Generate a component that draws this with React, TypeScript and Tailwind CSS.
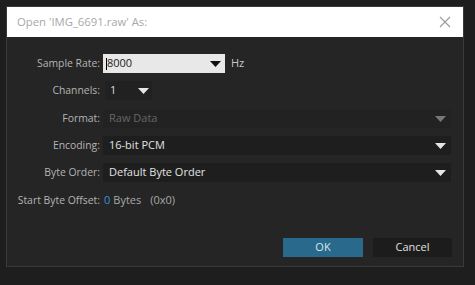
import React from "react";

const Arrow = ({ color }: { color: string }) => (
  <svg width="11" height="6" viewBox="0 0 11 6">
    <polygon points="0,0 11,0 5.5,6" fill={color} />
  </svg>
);

const Label = ({ children }: { children: React.ReactNode }) => (
  <div className="w-[96px] shrink-0 text-right pr-[3px] text-[10.4px] text-[#b4b4b4]">{children}</div>
);

export default function App() {
  return (
    <div
      className="w-[475px] h-[285px] bg-[#1e1e1e] pt-[6px] pl-[6px] overflow-hidden"
      style={{ fontFamily: '"Open Sans", "Noto Sans", sans-serif' }}
    >
      <div className="w-[458px] h-[261px] border border-[#3a3a3a] bg-[#252525] flex flex-col">
        <div className="h-[30px] bg-white flex items-center justify-between pl-[10px] pr-[12px]">
          <span className="text-[11.3px] text-[#a8a8a8]">Open 'IMG_6691.raw' As:</span>
          <svg width="12" height="12" viewBox="0 0 12 12">
            <path d="M1 1 L11 11 M11 1 L1 11" stroke="#9a9a9a" strokeWidth="1.1" />
          </svg>
        </div>
        <div className="flex flex-col text-[11px] pt-[17px] gap-[8px]">
          <div className="flex items-center h-[19px]">
            <Label>Sample Rate:</Label>
            <div className="w-[122px] h-[19px] bg-[#e8e8e8] flex items-center justify-between pl-[3px] pr-[4px] text-[#222]">
              <span className="flex items-center">
                <span className="inline-block w-[1px] h-[12px] bg-black" />
                <span>8000</span>
              </span>
              <Arrow color="#111" />
            </div>
            <span className="ml-[6px] text-[#c8c8c8]">Hz</span>
          </div>
          <div className="flex items-center h-[19px]">
            <Label>Channels:</Label>
            <div className="ml-[2px] w-[47px] h-[19px] bg-[#212121] flex items-center justify-between pl-[5px] pr-[3px] text-[#dedede]">
              <span>1</span>
              <Arrow color="#e6e6e6" />
            </div>
          </div>
          <div className="flex items-center h-[19px] mt-[1px]">
            <Label>Format:</Label>
            <div className="w-[348px] h-[19px] bg-[#222222] flex items-center justify-between pl-[6px] pr-[5px] text-[#666]">
              <span>Raw Data</span>
              <Arrow color="#777" />
            </div>
          </div>
          <div className="flex items-center h-[19px]">
            <Label>Encoding:</Label>
            <div className="w-[348px] h-[19px] bg-[#1e1e1e] flex items-center justify-between pl-[6px] pr-[5px] text-[#e2e2e2]">
              <span>16-bit PCM</span>
              <Arrow color="#e6e6e6" />
            </div>
          </div>
          <div className="flex items-center h-[19px]">
            <Label>Byte Order:</Label>
            <div className="w-[348px] h-[19px] bg-[#1e1e1e] flex items-center justify-between pl-[6px] pr-[5px] text-[#e2e2e2]">
              <span>Default Byte Order</span>
              <Arrow color="#e6e6e6" />
            </div>
          </div>
          <div className="flex items-center h-[19px] mt-[1px]">
            <Label>Start Byte Offset:</Label>
            <span className="ml-[1px] text-[#3d8fd4]">0</span>
            <span className="ml-[3px] text-[#a8a8a8]">Bytes</span>
            <span className="ml-[9px] text-[#a8a8a8]">(0x0)</span>
          </div>
        </div>
        <div className="flex justify-end gap-[10px] pr-[11px] mt-[28px] text-[11px]">
          <div className="w-[80px] h-[19px] bg-[#29698b] flex items-center justify-center text-[#d8e6ee]">OK</div>
          <div className="w-[79px] h-[19px] bg-[#1c1c1c] flex items-center justify-center text-[#e0e0e0]">Cancel</div>
        </div>
      </div>
    </div>
  );
}
